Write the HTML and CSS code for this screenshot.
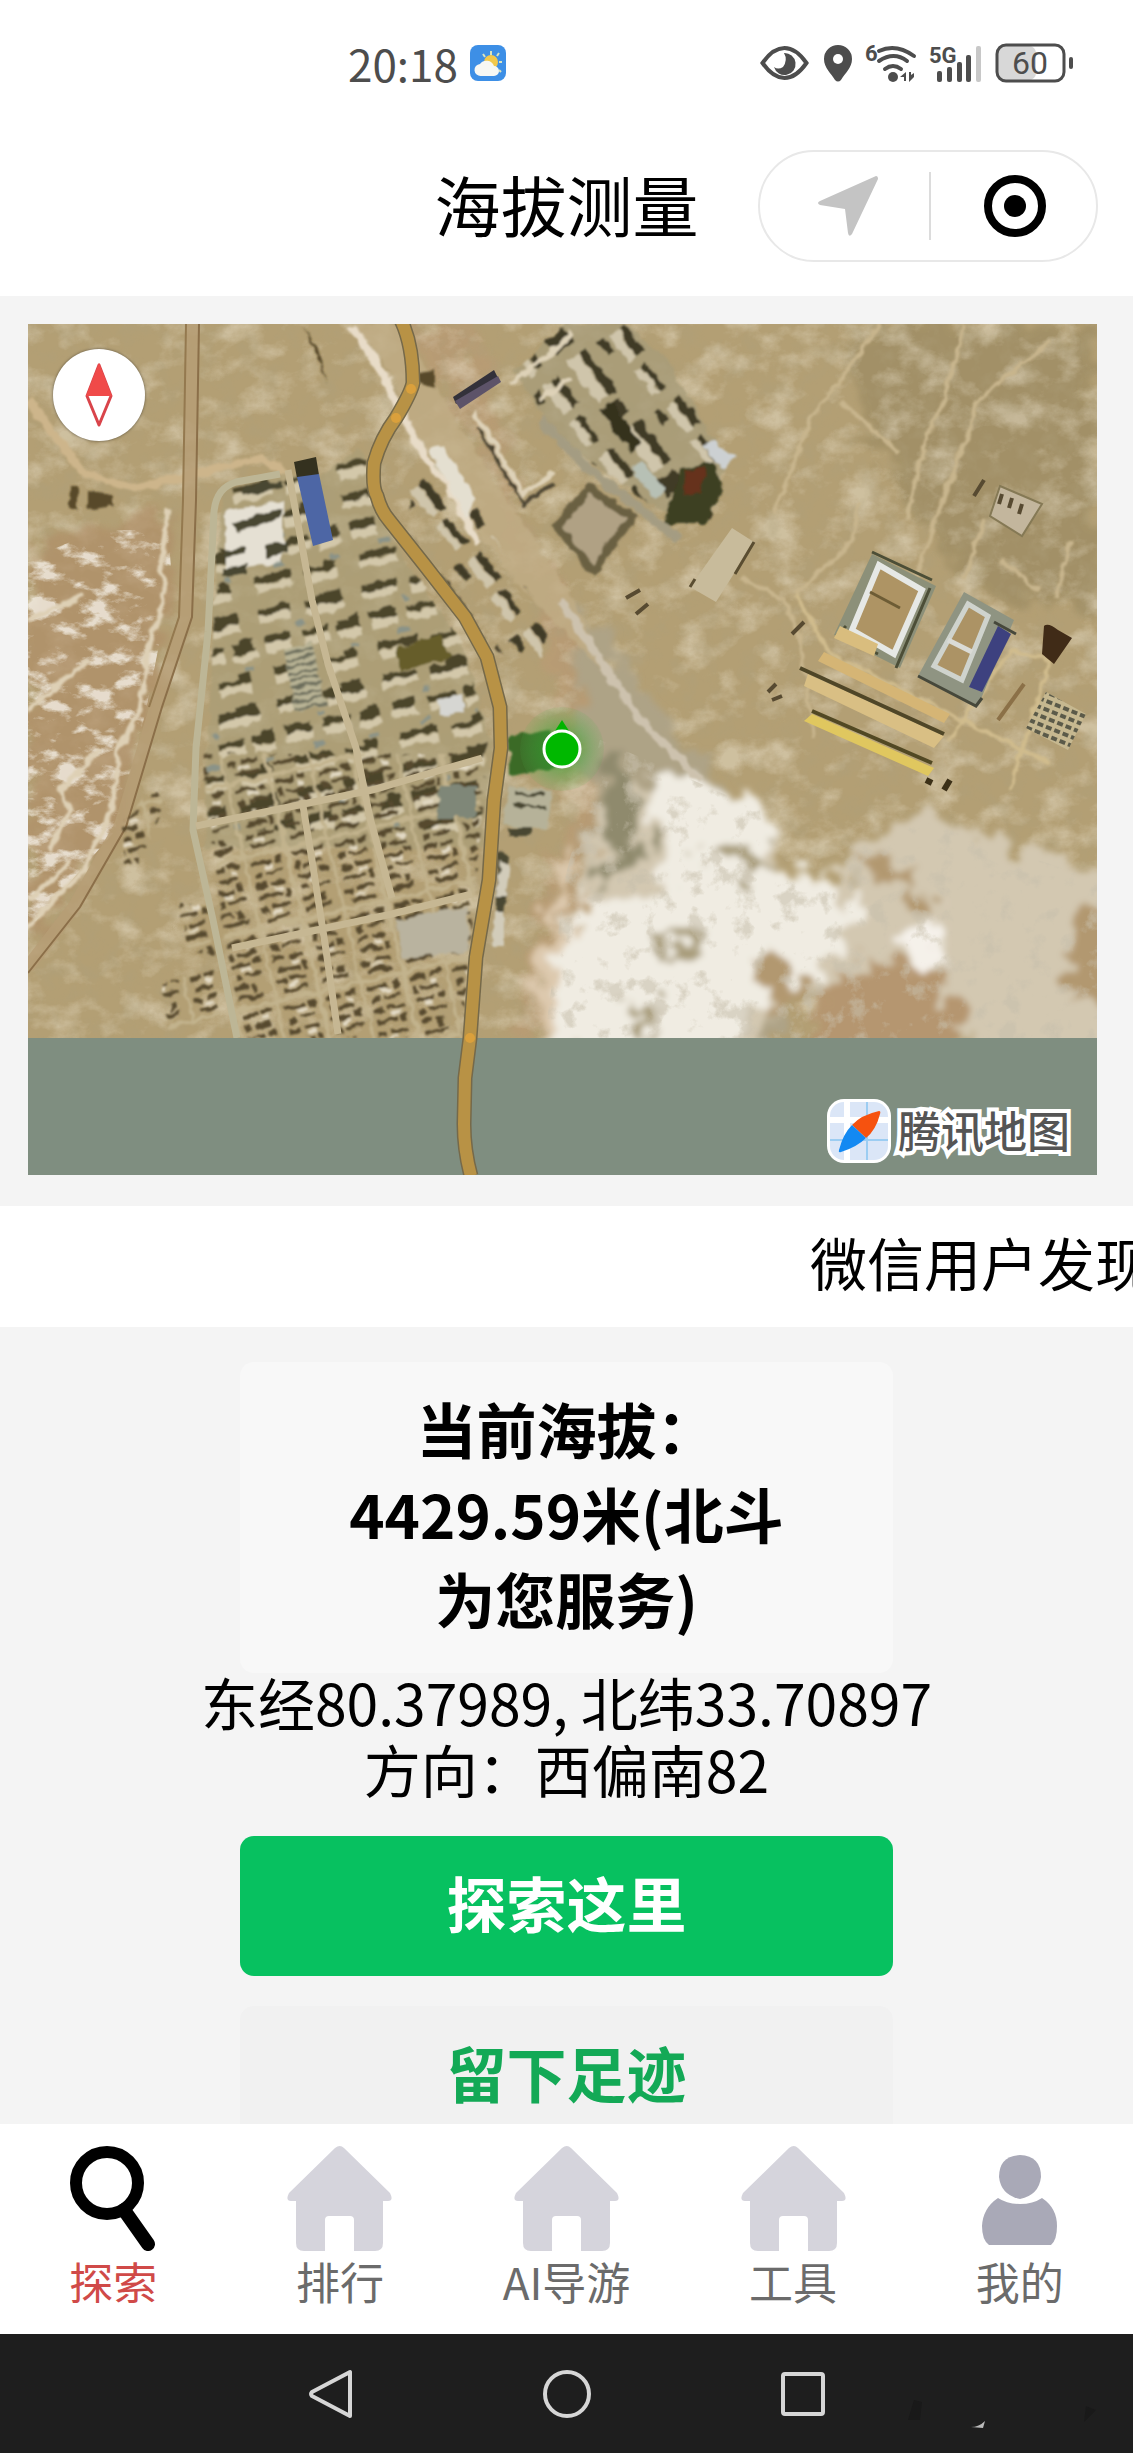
FILE: index.html
```html
<!DOCTYPE html>
<html lang="zh-CN">
<head>
    <meta charset="UTF-8">
    <meta name="viewport" content="width=device-width, initial-scale=1">
    <title>海拔测量</title>
    <link rel="stylesheet" href="styles.css">
</head>

<body>
    <header class="header">
        <div class="status-bar">
            <div class="status-left">
                <span>20:18</span>
                <svg width="36" height="36" viewBox="0 0 36 36">
                    <rect width="36" height="36" rx="8" fill="#3d8fe6" />
                    <path d="M13 9l2 3M21 6v4M29 8l-2 3M32 17h-3M31 27l-2-2" stroke="#d9e3c0" stroke-width="2" />
                    <circle cx="21" cy="17" r="7" fill="#f2c94c" />
                    <path d="M11 31a6 6 0 0 1-1-12 8 8 0 0 1 14 2 5 5 0 0 1 0 10z" fill="#f7f8f4" />
                </svg>
            </div>
            <div class="status-right">
                <svg width="49" height="36" viewBox="0 0 49 36">
                    <path d="M2.500 18Q13 3 24.500 3T46.500 18Q36 33 24.500 33T2.500 18z" fill="none" stroke="#4d4d4d" stroke-width="4" />
                    <path d="M24 8a11 11 0 1 1-10 14q4 3 9 0 5-7 1-14z" fill="#4d4d4d" />
                </svg>
                <svg class="pin" width="30" height="38" viewBox="0 0 30 38">
                    <path d="M15 1a14 14 0 0 1 14 14c0 9-7 14-11 21q-3 3-6 0C8 29 1 24 1 15A14 14 0 0 1 15 1z" fill="#4d4d4d" />
                    <circle cx="15" cy="15" r="5" fill="#fff" />
                </svg>
                <svg class="wifi" width="52" height="40" viewBox="0 0 52 40">
                    <text class="net" x="0" y="18">6</text>
                    <g fill="none" stroke="#4d4d4d" stroke-width="4" stroke-linecap="round">
                        <path d="M14 8q17-8 35 5" />
                        <path d="M14 18q15-10 28 0" />
                        <path d="M20 26q8-6 16 0" />
                    </g>
                    <circle cx="28" cy="34" r="5" fill="#4d4d4d" />
                    <path d="M41 29v9h-2v-4h-4zM44 29v10l5-5v-4l-3 2v-3z" fill="#4d4d4d" />
                </svg>
                <svg class="signal" width="54" height="40" viewBox="0 0 54 40">
                    <text class="net" x="0" y="20">5G</text>
                    <g fill="#4d4d4d">
                        <rect x="8" y="28" width="5" height="11" rx="2" />
                        <rect x="18" y="24" width="5" height="15" rx="2" />
                        <rect x="28" y="19" width="5" height="20" rx="2" />
                        <rect x="37" y="12" width="5" height="27" rx="2" />
                    </g>
                    <rect x="47" y="3" width="5" height="36" rx="2" fill="#c8c8c8" />
                </svg>
                <svg class="battery" width="78" height="40" viewBox="0 0 78 40">
                    <rect x="3" y="3" width="38" height="34" rx="7" fill="#d8d8d8" />
                    <rect x="2" y="2" width="67" height="36" rx="9" fill="none" stroke="#4d4d4d" stroke-width="3" />
                    <rect x="74" y="14" width="4" height="12" rx="2" fill="#4d4d4d" />
                    <text class="level" x="35" y="31" text-anchor="middle">60</text>
                </svg>
            </div>
        </div>
        <div class="title-bar">
            <h1 class="title">海拔测量</h1>
            <div class="capsule">
                <button class="capsule-btn" type="button" aria-label="位置">
                    <svg width="60" height="60" viewBox="0 0 60 60">
                        <path d="M58 0Q60 0 60 3L34 58Q31 62 30 57L27 33 2 29Q-2 27 2 25z" fill="#c4c4c4" />
                    </svg>
                </button>
                <button class="capsule-btn" type="button" aria-label="关闭">
                    <svg width="64" height="64" viewBox="0 0 64 64">
                        <circle cx="32" cy="32" r="27" fill="none" stroke="#000" stroke-width="8" />
                        <circle cx="32" cy="32" r="11" />
                    </svg>
                </button>
            </div>
        </div>
    </header>

    <main class="content">
        <section class="map">
            <svg class="map-canvas" viewBox="28 324 1069 851" preserveAspectRatio="xMidYMid slice">
                <defs>
                    <filter id="light" x="0" y="0" width="100%" height="100%">
                        <feTurbulence type="fractalNoise" baseFrequency="0.025 0.035" numOctaves="5" seed="4" />
                        <feColorMatrix values="0 0 0 0 .82  0 0 0 0 .75  0 0 0 0 .6  3 0 0 0 -1.400" />
                    </filter>
                    <filter id="dark" x="0" y="0" width="100%" height="100%">
                        <feTurbulence type="fractalNoise" baseFrequency="0.05" numOctaves="4" seed="9" />
                        <feColorMatrix values="0 0 0 0 .42  0 0 0 0 .35  0 0 0 0 .2  2 0 0 0 -.900" />
                    </filter>
                    <filter id="streaks" x="0" y="0" width="100%" height="100%">
                        <feTurbulence type="fractalNoise" baseFrequency="0.035 0.06" numOctaves="5" seed="21" />
                        <feColorMatrix values="0 0 0 0 .9  0 0 0 0 .86  0 0 0 0 .78  5 0 0 0 -2.500" />
                        <feComposite in2="SourceGraphic" operator="in" />
                    </filter>
                    <filter id="mottle" x="0" y="0" width="100%" height="100%">
                        <feTurbulence type="fractalNoise" baseFrequency="0.045" numOctaves="5" seed="14" />
                        <feColorMatrix values="0 0 0 0 .58  0 0 0 0 .53  0 0 0 0 .42  6 0 0 0 -3.300" />
                        <feComposite in2="SourceGraphic" operator="in" />
                    </filter>
                    <filter id="rough" x="-10%" y="-10%" width="120%" height="120%">
                        <feTurbulence type="fractalNoise" baseFrequency="0.04" numOctaves="5" seed="3" />
                        <feDisplacementMap in="SourceGraphic" scale="60" xChannelSelector="R" yChannelSelector="G" />
                        <feGaussianBlur stdDeviation="3" />
                    </filter>
                    <filter id="uneven">
                        <feTurbulence type="fractalNoise" baseFrequency="0.08" numOctaves="2" seed="8" />
                        <feDisplacementMap in="SourceGraphic" scale="9" xChannelSelector="R" yChannelSelector="G" />
                        <feGaussianBlur stdDeviation="1" />
                    </filter>
                    <radialGradient id="halo">
                        <stop offset="0" stop-color="#1d9a1d" stop-opacity=".8" />
                        <stop offset="1" stop-color="#4db64d" stop-opacity=".1" />
                    </radialGradient>
                    <!-- большие дома -->
                    <pattern id="blocks" width="108" height="92" patternUnits="userSpaceOnUse" patternTransform="rotate(-13)">
                        <g fill="#d3c8aa">
                            <path d="M4 15h34v7H4zM52 18h40v8H52zM6 44h26v9H6zM44 45h28v8H44zM80 48h22v8H80zM8 76h38v8H8zM60 78h32v8H60z" />
                        </g>
                        <g fill="#4b452b">
                            <path d="M4 8h34v7H4zM52 10h18v-4h22v12H52zM6 35h26v9H6zM44 38h28v6H44zM80 38h10v-4h12v13H80zM8 68h38v7H8zM60 72h20v-5h12v10H60z" />
                        </g>
                        <path d="M30 58h12v5H30zM88 62h8v4h-8zM42 28h6v5h-6z" fill="#8a9388" />
                    </pattern>
                    <!-- плотная застройка -->
                    <pattern id="yards" width="86" height="74" patternUnits="userSpaceOnUse" patternTransform="rotate(-13)">
                        <path d="M0 0h86v4H0zM0 0h4v74H0zM43 0h3v74h-3z" fill="#c2b38d" />
                        <g fill="#57492d">
                            <path d="M7 8h16v5H7zM26 7h12v4H26zM8 18h5v8H8zM16 20h18v4H16zM7 31h20v4H7zM30 28h8v6h-8zM9 42h7v6H9zM20 42h17v3H20zM7 53h14v4H7zM25 54h5v8h-5zM8 64h26v4H8z" />
                            <path d="M50 9h20v4H50zM74 8h8v7h-8zM52 20h7v7h-7zM63 21h18v3H63zM50 32h12v5H50zM66 32h15v4H66zM52 44h22v4H52zM77 42h5v8h-5zM50 56h8v5h-8zM62 55h18v4H62zM54 66h24v4H54z" />
                        </g>
                        <path d="M27 14h8v4h-8zM17 36h9v4h-9zM63 14h8v4h-8zM67 38h9v4h-9zM60 61h10v3H60z" fill="#e2d9c4" />
                    </pattern>
                    <pattern id="east" width="90" height="84" patternUnits="userSpaceOnUse" patternTransform="rotate(52)">
                        <path d="M4 6h52v9H4zM64 10h18v22H64zM10 44h34v8H10zM54 50h30v6H54zM8 68h16v8H8z" fill="#413b26" />
                        <path d="M4 16h52v12H4zM10 53h34v10H10zM54 57h30v8H54z" fill="#cfc5ab" />
                    </pattern>
                    <pattern id="rows" width="9" height="8" patternUnits="userSpaceOnUse" patternTransform="rotate(22)">
                        <rect width="6" height="4" fill="#5b5a49" />
                    </pattern>
                    <pattern id="slats" width="30" height="7" patternUnits="userSpaceOnUse" patternTransform="rotate(-13)">
                        <rect width="30" height="3" fill="#6c6d5c" />
                    </pattern>
                </defs>

                <rect x="28" y="324" width="1069" height="714" fill="#b39f74" />
                <path d="M840 324h257v290l-120-20-100-140z" fill="#9c8b62" filter="url(#rough)" opacity=".7" />
                <path d="M470 324l-70 0 80 120 60 170 30 180-60 244h140l60-200-90-130-90-170z" fill="#b99b74" filter="url(#rough)" opacity=".8" />
                <rect x="28" y="324" width="1069" height="714" filter="url(#light)" opacity=".5" />
                <rect x="28" y="324" width="1069" height="714" filter="url(#dark)" opacity=".5" />

                <!-- русло слева -->
                <path d="M28 550l140-40 8 60-26 140-30 120-92 110z" fill="#b08f68" filter="url(#rough)" opacity=".7" />
                <path d="M28 560l70-30 70 0 4 50-26 130-30 120-88 100z" fill="#fff" filter="url(#streaks)" opacity=".8" />
                <g fill="none" stroke="#ded0b5" stroke-width="5" filter="url(#uneven)">
                    <path d="M168 510l-8 60 6 20-18 60-8 60-22 40-6 60-28 60-60 60" />
                    <path d="M28 620l56-26M28 710l60-50M50 850l20-40-10-20 40-40M30 900l40-40" />
                    <path d="M28 400l56 74 50 14 70-16 58-14 22 14 10 28" stroke="#cdb58b" stroke-width="8" />
                </g>

                <!-- солончак -->
                <g filter="url(#rough)">
                    <path d="M575 600l50 60 60 80 60 60 10 80 60 70-40 100H570l30-180-20-120z" fill="#aea386" />
                    <path d="M610 780l90 0 60 20 24 40-14 40 70 0 16-45 60-20 70 22 140 34v190h-100l-90-40-150-30-40 88H540l20-110 20-70z" fill="#d3c8b1" />
                    <path d="M655 790l20-16 40 14 40 4 24 40-16 20 14 20 60 4 16 40-28 60-60 20-40 60H545l10-90 20-60 70-10 20-24-14-40z" fill="#f0ece2" />
                    <path d="M820 995l60-40 60 10 20 50-30 48H800z" fill="#b59670" />
                    <path d="M850 850l40 10 50 50-50-20zM750 960l40-6 16 40-30 12zM1070 920h50l0 90-50-10z" fill="#b29870" />
                    <path d="M650 935l60 4-10 12-50-4zM620 1000l40 10-10 20zM700 850l50 26 30-10-60-30z" fill="#a89c7a" />
                    <path d="M910 930l30-24 4 30-20 40-12-14z" fill="#f5f1ea" />
                    <path d="M600 770l10 60-14 60 30-30 20 0-8-60-20-50z" fill="#8f8a6d" />
                    <path d="M540 960l26-110 6 0-16 188h-18z" fill="#ddc9ae" />
                </g>
                <path d="M600 740l70 30 90 40 10 70 60 0 30-50 60-10 177 60v158H545l20-160z" filter="url(#mottle)" opacity=".55" />
                <g filter="url(#uneven)">
                    <path d="M400 324l-44 0 40 56 10 40 20 24 40 70 60 80 80 80-30-70-60-90-70-110z" fill="#c1ad86" opacity=".8" />
                    <path d="M352 326l32 50 20 44 24 40 20 24 30 60" fill="none" stroke="#e8dcc8" stroke-width="8" />
                    <path d="M560 600l40 60 40 60 60 60" fill="none" stroke="#cdc2ae" stroke-width="8" />
                </g>

                <!-- просёлочные дороги -->
                <g fill="none" stroke="#c8b58d" stroke-width="4" filter="url(#uneven)">
                    <path d="M880 324l-40 56-30 40-22 60-14 34M964 324l-20 76-18 40-20 80M1052 340l-74 60-20 60-30 80-24 80" />
                    <path d="M740 578l42 20 18 40 14 100M796 594l56-52 6-40M840 400l60 54M984 520l-20 60M1000 560l40 30M1070 540l-14 60" />
                    <path d="M796 594l34 60 220 110M950 740l60-90 40 10-40 130" stroke="#d0bc8d" />
                </g>
                <g fill="none" stroke="#b69d76" stroke-width="13">
                    <path d="M193 324l-3 176-4 117-30 90-36 120-46 80-46 60" opacity=".8" />
                    <path d="M199 324l-3 176-4 117-30 90-36 120-46 80-52 66" stroke="#8b6f49" stroke-width="2" />
                    <path d="M186 324l-3 176-4 117-30 90" stroke="#94794f" stroke-width="2" />
                </g>

                <!-- кварталы посёлка -->
                <g filter="url(#uneven)">
                    <path d="M222 490l66-16 30 4 40-30 14 30 20 60 76 120 24 90-10 100H204l10-250z" fill="#a99e78" opacity=".7" />
                    <path d="M222 490l64-14 76-22 10 20 14 50 76 120 24 90-4 96H206l8-220z" fill="url(#blocks)" />
                    <path d="M204 754h282l-24 284H238l-16-110z" fill="url(#yards)" />
                    <path d="M162 984l50-18 8 50-50 14zM180 904l30 0 4 50-26-4z" fill="url(#yards)" />
                    <path d="M124 820l30-34 10 16-24 60-16 10z" fill="url(#yards)" />
                    <path d="M226 510l56-8v60l-56 8z" fill="#e5e0d3" />
                    <path d="M242 488l40-8v8l-40 8zM232 524l48-16v10l-44 14zM224 550l22-3v8l-22 4zM266 545l22-4v12l-22 4zM222 568l26-4v9l-26 4z" fill="#4a4630" />
                    <path d="M284 650l28-8 14 62-30 8z" fill="#b9b495" />
                    <path d="M284 650l28-8 14 62-30 8z" fill="url(#slats)" />
                    <path d="M396 648l46-14 8 24-50 12z" fill="#665d2b" />
                    <path d="M436 700l26-6 2 18-24 4z" fill="#d6d6d2" />
                    <path d="M440 786h36v32h-40z" fill="#7f8778" />
                    <path d="M396 920l70-14 4 46-66 6z" fill="#b9b39f" />
                    <path d="M510 736l40-8 6 40-46 8z" fill="#3a6b26" />
                    <path d="M508 786l44 4-4 40-44-4z" fill="#b6b299" />
                    <path d="M516 792h30v4h-30zM514 804h32v3h-32zM508 828h22v8h-22zM498 850l12 6-6 60-10 30z" fill="#4a4731" />
                    <path d="M500 860l10 6-4 30h-10zM494 912h10v34h-12z" fill="#d2ccba" />
                </g>
                <g fill="none" stroke="#c6b793" stroke-width="7">
                    <path d="M288 470l24 130 16 64 28 84 14 70 22 80" />
                    <path d="M280 474l-44 8q-20 6-22 30l-6 120-12 116-3 82 20 90 24 118" stroke="#bdb696" />
                    <path d="M196 826l176-36 110-32M232 948l160-34 80-20M302 800l10 60 14 90 12 84" />
                </g>
                <path d="M294 462l22-5 3 18-22 3z" fill="#34311f" />
                <path d="M297 477l22-3 14 66-20 6z" fill="#4d66a5" />

                <!-- восточные кварталы -->
                <g filter="url(#uneven)">
                    <path d="M412 470l26-18 110 170-10 60-50-40-80-110z" fill="url(#east)" />
                    <path d="M514 372l52-48h60l40 36 60 100-16 60-50-10-100-70z" fill="#a89c79" opacity=".8" />
                    <path d="M514 372l52-48h60l40 36 60 100-16 60-50-10-100-70z" fill="url(#east)" />
                    <path d="M430 450l12-5 34 52-10 22z" fill="#e4dfd0" />
                    <path d="M552 526l36-44 50 34-44 62z" fill="#6b6042" />
                    <path d="M562 526l28-32 36 24-34 46z" fill="#b0a184" />
                    <path d="M680 470l34-8 10 28-20 34-40 0z" fill="#3c3f20" />
                    <path d="M686 470l20-2-6 24-18 2z" fill="#66301c" />
                    <path d="M703 446l10-4 22 16-12 10z" fill="#ccd0d2" />
                    <path d="M632 470l10-8 24 26-12 12z" fill="#b7c0b5" />
                    <path d="M600 410l12-8 28 40-8 12z" fill="#35331f" />
                    <path d="M474 412l50 82 30-22M512 384l60-50M540 400l30-22" fill="none" stroke="#ded2b8" stroke-width="5" />
                    <path d="M478 428l46 76 32-22" fill="none" stroke="#4a4330" stroke-width="3" />
                    <path d="M540 420l50 50 90 70" fill="none" stroke="#a49c82" stroke-width="9" />
                    <path d="M420 372l14-3v20l-14-6zM304 326l14 24 10 34M70 486h8v22h-8zM88 490l24 4v12l-24 4z" fill="#584a2c" />
                </g>
                <path d="M453 397l41-27 4 8-42 26z" fill="#33313a" />
                <path d="M455 401l43-25 3 6-41 27z" fill="#5d5369" />
                <path d="M732 528l22 14-38 60-26-15z" fill="#c8bb9b" />
                <path d="M754 542l-19 32M690 587l5-8" stroke="#5a4d31" stroke-width="3" />

                <!-- военный городок -->
                <g>
                    <path d="M872 554l64 32-36 82-66-33z" fill="#8c9079" />
                    <path d="M879 565l43 25-28 64-42-24z" fill="#ae9464" stroke="#e6e8e5" stroke-width="6" />
                    <path d="M872 552l60 28M846 626l-8 8 40 20M930 588l-34 80" fill="none" stroke="#4c4e37" stroke-width="3" />
                    <path d="M870 592l30 16" stroke="#6d5c35" stroke-width="3" />
                    <path d="M840 626l38 18-4 12-40-18z" fill="#d9bd7e" />
                    <path d="M964 592l50 28-36 86-60-30z" fill="#8f9482" />
                    <path d="M968 604l20 12-26 64-28-14z" fill="#ac9365" stroke="#cfd3cd" stroke-width="5" />
                    <path d="M948 640l24 12" stroke="#dadbd6" stroke-width="5" />
                    <path d="M998 626l13 8-29 58-13-5z" fill="#3d417f" />
                    <path d="M994 622l22 12M918 676l58 30 6-8" fill="none" stroke="#46483b" stroke-width="3" />
                    <path d="M824 652l126 62-6 9-126-62z" fill="#d5b575" />
                    <path d="M808 674l136 62-10 12-130-62z" fill="#d9bf84" />
                    <path d="M800 668l144 66" stroke="#4f4627" stroke-width="4" />
                    <path d="M812 714l122 54-6 8-124-55z" fill="#e0c75f" />
                    <path d="M812 711l120 52" stroke="#514823" stroke-width="4" />
                    <path d="M1044 626q4-4 14 4l14 8-18 26-12-10z" fill="#402b17" />
                    <path d="M1046 692l40 22-18 36-42-22z" fill="#c6b890" />
                    <path d="M1046 692l40 22-18 36-42-22z" fill="url(#rows)" />
                    <path d="M1000 486l42 18-20 32-32-20z" fill="#c3b69d" stroke="#857955" stroke-width="2" />
                    <path d="M984 480l-10 16M1002 494l-3 10M1012 498l-3 10M1022 504l-3 10M626 598l14-8M636 614l12-10M792 634l12-12M768 692l8-8M772 700l10-4" stroke="#574a31" stroke-width="4" />
                    <path d="M1024 684l-26 36" stroke="#8b7047" stroke-width="4" />
                    <path d="M926 780l6 3M944 790l6-10" stroke="#3c3017" stroke-width="6" />
                </g>

                <rect x="28" y="1038" width="1069" height="137" fill="#7f8e80" />

                <!-- трасса -->
                <g fill="none">
                    <path d="M401 320q12 25 12 63-2 10-17 35-15 20-22 45-2 25 3 33 4 15 12 24l34 43 42 54 22 40 13 50 1 41-7 52-5 80-13 77-6 81-5 40-1 46q0 26 7 52" stroke="#75694a" stroke-width="15" />
                    <path d="M401 320q12 25 12 63-2 10-17 35-15 20-22 45-2 25 3 33 4 15 12 24l34 43 42 54 22 40 13 50 1 41-7 52-5 80-13 77-6 81-5 40-1 46q0 26 7 52" stroke="#b89245" stroke-width="12" />
                </g>
                <g fill="#daa03c">
                    <circle cx="411" cy="389" r="5" />
                    <circle cx="396" cy="418" r="5" />
                    <circle cx="470" cy="1038" r="5" />
                </g>

                <!-- текущее положение -->
                <circle cx="562" cy="749" r="42" fill="url(#halo)" />
                <path d="M562 720l9 14h-18z" fill="#00b400" />
                <circle cx="562" cy="749" r="18" fill="#00b800" stroke="#fff" stroke-width="3" />
            </svg>

            <button class="compass" type="button" aria-label="指南针">
                <svg width="28" height="68" viewBox="0 0 28 68">
                    <path d="M2 35L14 4l12 31-12 29z" fill="#fff" stroke="#d9444a" stroke-width="3" stroke-linejoin="round" />
                    <path d="M1 35L14 2l13 33z" fill="#f04a49" />
                </svg>
            </button>
            <div class="map-logo">
                <svg width="64" height="64" viewBox="0 0 64 64">
                    <rect width="64" height="64" rx="17" fill="#fff" />
                    <rect x="3" y="3" width="58" height="58" rx="14" fill="#dbe6f7" />
                    <path d="M20 3v58M3 21h58" stroke="#fff" stroke-width="6" />
                    <path d="M40 3v58M3 41h58" stroke="#9ccdf2" stroke-width="2" />
                    <path d="M52 12q2 0 1 3-4 16-14 24L25 26q9-10 27-14z" fill="#f6520f" />
                    <path d="M25 26l14 13q-9 9-25 14-3 1-2-2 4-16 13-25z" fill="#1389f2" />
                </svg>
                <span>腾讯地图</span>
            </div>
        </section>

        <div class="notice"><p class="notice-text">微信用户发现</p></div>

        <section class="info">
            <h2 class="altitude">当前海拔：<br>4429.59米(北斗<br>为您服务)</h2>
            <p class="position">东经80.37989, 北纬33.70897<br>方向：西偏南82</p>
            <button class="btn btn-primary" type="button">探索这里</button>
            <button class="btn btn-default" type="button">留下足迹</button>
        </section>
    </main>

    <nav class="tab-bar">
        <a class="tab active" href="#explore">
            <svg width="105" height="105" viewBox="0 0 105 105">
                <circle cx="46" cy="37" r="31" fill="none" stroke="#000" stroke-width="12" />
                <path d="M63 64l24 34" stroke="#000" stroke-width="14" stroke-linecap="round" />
            </svg>
            <span>探索</span>
        </a>
        <a class="tab" href="#rank">
            <svg width="105" height="105" viewBox="0 0 105 105">
                <path d="M48 2q5-4 9 0l46 45q4 8-2 8h-5v42q0 8-8 8H67V74q0-4-4-4H42q-4 0-4 4v31H17q-8 0-8-8V55H4q-6 0-2-8z" fill="#d5d4dc" />
            </svg>
            <span>排行</span>
        </a>
        <a class="tab" href="#guide">
            <svg width="105" height="105" viewBox="0 0 105 105">
                <path d="M48 2q5-4 9 0l46 45q4 8-2 8h-5v42q0 8-8 8H67V74q0-4-4-4H42q-4 0-4 4v31H17q-8 0-8-8V55H4q-6 0-2-8z" fill="#d5d4dc" />
            </svg>
            <span>AI导游</span>
        </a>
        <a class="tab" href="#tools">
            <svg width="105" height="105" viewBox="0 0 105 105">
                <path d="M48 2q5-4 9 0l46 45q4 8-2 8h-5v42q0 8-8 8H67V74q0-4-4-4H42q-4 0-4 4v31H17q-8 0-8-8V55H4q-6 0-2-8z" fill="#d5d4dc" />
            </svg>
            <span>工具</span>
        </a>
        <a class="tab" href="#mine">
            <svg width="105" height="105" viewBox="0 0 105 105">
                <path d="M53 9q21 1 21 22-2 18-21 22-19-4-21-22Q32 10 53 9z" fill="#a9a9b7" />
                <path d="M31 52q9 6 22 6t22-6q15 10 15 28 0 14-6 19H22q-7-5-7-19 1-18 16-28z" fill="#a9a9b7" />
            </svg>
            <span>我的</span>
        </a>
    </nav>

    <footer class="system-nav">
        <button type="button" aria-label="返回">
            <svg width="48" height="52" viewBox="0 0 48 52">
                <path d="M43 4v44L5 28q-2-2 0-4z" fill="none" stroke="#d6d6d6" stroke-width="4" stroke-linejoin="round" />
            </svg>
        </button>
        <button type="button" aria-label="主页">
            <svg width="48" height="52" viewBox="0 0 48 52">
                <circle cx="24" cy="26" r="22" fill="none" stroke="#d6d6d6" stroke-width="4" />
            </svg>
        </button>
        <button type="button" aria-label="最近">
            <svg width="48" height="52" viewBox="0 0 48 52">
                <rect x="4" y="6" width="40" height="40" rx="2" fill="none" stroke="#d6d6d6" stroke-width="4" />
            </svg>
        </button>
        <svg class="mark" width="205" height="38" viewBox="0 0 205 38">
            <path d="M18 8l8 2-2 18-12 0zM190 14l10 4-12 12z" fill="#191919" />
            <path d="M75 35q8 0 14-6l-2 7z" fill="#bbb" />
        </svg>
    </footer>
</body>
</html>
```
FILE: styles.css
```css
* {
    box-sizing: border-box;
}

body {
    margin: 0;
    height: 100vh;
    display: flex;
    flex-direction: column;
    background: #f4f4f4;
    color: #000;
    font-family: "Noto Sans CJK SC", "Noto Sans", sans-serif;
}

h1, h2, p {
    margin: 0;
}

svg {
    display: block;
}

button {
    margin: 0;
    padding: 0;
    border: 0;
    background: none;
    font-family: inherit;
}

/* Шапка */
.header {
    flex: none;
    background: #fff;
}

.status-bar {
    display: flex;
    justify-content: space-between;
    align-items: center;
    height: 116px;
    padding: 10px 60px 0 348px;
    color: #4d4d4d;
}

.status-left, .status-right {
    display: flex;
    align-items: center;
}

.status-left {
    gap: 12px;
    font-size: 44px;
    line-height: 60px;
}

.pin {
    margin-left: 14px;
}

.wifi, .signal {
    margin-left: 12px;
    overflow: visible;
}

.battery {
    margin-left: 12px;
}

.net {
    font-family: Roboto, sans-serif;
    font-size: 22px;
    font-weight: 700;
    fill: #4d4d4d;
}

.level {
    font-family: Roboto, sans-serif;
    font-size: 32px;
    font-weight: 400;
    fill: #4d4d4d;
}

.title-bar {
    display: grid;
    grid-template-columns: 1fr auto 1fr;
    align-items: center;
    height: 180px;
    padding: 0 35px;
}

.title {
    grid-column: 2;
    padding-bottom: 6px;
    font-size: 66px;
    font-weight: 400;
    line-height: 90px;
}

.capsule {
    display: flex;
    justify-self: end;
    align-items: center;
    width: 340px;
    height: 112px;
    padding-left: 4px;
    border: 2px solid #e8e8e8;
    border-radius: 56px;
}

.capsule-btn {
    flex: 1;
    display: flex;
    justify-content: center;
    align-items: center;
    height: 68px;
    padding-left: 2px;
}

.capsule-btn + .capsule-btn {
    border-left: 2px solid #dcdcdc;
}

/* Карта */
.content {
    flex: 1;
    min-height: 0;
    overflow: hidden;
}

.map {
    position: relative;
    margin: 28px 36px 31px 28px;
}

.map-canvas {
    width: 100%;
    height: 851px;
}

.compass {
    position: absolute;
    top: 25px;
    left: 25px;
    display: flex;
    justify-content: center;
    align-items: center;
    width: 92px;
    height: 92px;
    border-radius: 50%;
    background: #fff;
    box-shadow: 0 0 3px rgba(0, 0, 0, 0.5);
}

.map-logo {
    position: absolute;
    right: 27px;
    bottom: 12px;
    display: flex;
    align-items: center;
    gap: 7px;
    color: #555;
    font-size: 43px;
    font-weight: 500;
    line-height: 60px;
    -webkit-text-stroke: 8px #fff;
    paint-order: stroke fill;
}

.map-logo span {
    padding-bottom: 4px;
}

/* Бегущая строка */
.notice {
    overflow: hidden;
    height: 121px;
    background: #fff;
}

.notice-text {
    padding-left: 810px;
    font-size: 57px;
    line-height: 110px;
    white-space: nowrap;
}

.info {
    display: flex;
    flex-direction: column;
    align-items: center;
    padding-top: 35px;
}

.altitude {
    width: 653px;
    padding: 23px 0 33px;
    border-radius: 14px;
    background: #f8f8f8;
    font-size: 60px;
    font-weight: 700;
    line-height: 85px;
    text-align: center;
}

.position {
    margin-top: -5px;
    font-size: 57px;
    line-height: 67px;
    text-align: center;
}

.btn {
    width: 653px;
    height: 140px;
    padding-bottom: 9px;
    border-radius: 14px;
    font-size: 60px;
    font-weight: 700;
}

.btn-primary {
    margin-top: 34px;
    background: #07c160;
    color: #fff;
}

.btn-default {
    margin-top: 30px;
    background: #f1f1f1;
    color: #13a956;
}

/* Нижнее меню */
.tab-bar {
    flex: none;
    display: flex;
    height: 210px;
    padding-top: 22px;
    background: #fff;
}

.tab {
    flex: 1;
    display: flex;
    flex-direction: column;
    align-items: center;
    color: #6b6b6b;
    font-size: 44px;
    line-height: 60px;
    text-decoration: none;
}

.tab.active {
    color: #d04a48;
}

.system-nav {
    position: relative;
    flex: none;
    display: flex;
    justify-content: center;
    align-items: center;
    gap: 188px;
    height: 119px;
    background: #1e1e1e;
}

.mark {
    position: absolute;
    right: 32px;
    bottom: 23px;
}
```
